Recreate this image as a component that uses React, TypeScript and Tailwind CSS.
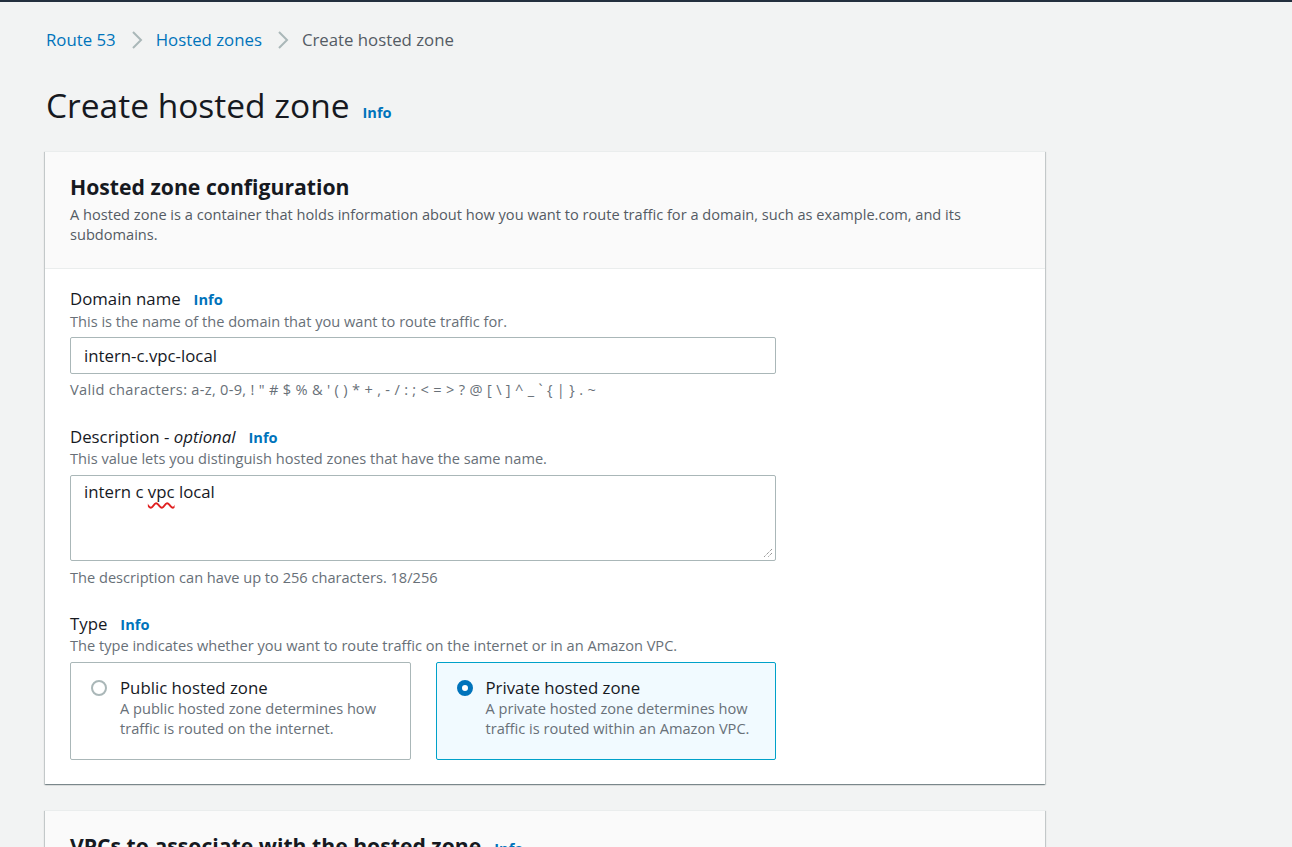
const font = { fontFamily: '"Open Sans", "Noto Sans", Arial, sans-serif' };

const Chevron = () => (
  <svg className="ml-[15px] mr-[13px] shrink-0" width="12" height="20" viewBox="0 0 12 20">
    <path d="M2 2 L10 10 L2 18" fill="none" stroke="#aab7b8" strokeWidth="2" />
  </svg>
);

const Info = ({ className = "" }: { className?: string }) => (
  <span className={`text-[14.6px] font-bold text-[#0073bb] ml-[13px] ${className}`}>Info</span>
);

const RadioCard = ({
  title,
  desc,
  checked,
}: {
  title: string;
  desc: string;
  checked?: boolean;
}) => (
  <div
    className={`flex-1 rounded-[2px] border pt-[14px] pl-[20px] pr-4 h-[98px] flex gap-[13px] ${
      checked ? "border-[#00a1c9] bg-[#f1faff]" : "border-[#aab7b8] bg-white"
    }`}
  >
    <div className="pt-[3px]">
      {checked ? (
        <div className="w-4 h-4 rounded-full border-[5px] border-[#0073bb] bg-white" />
      ) : (
        <div className="w-4 h-4 rounded-full border-2 border-[#aab7b8] bg-white" />
      )}
    </div>
    <div>
      <div className="text-[16.8px] leading-[22px] text-[#16191f]">{title}</div>
      <div className="text-[14.6px] leading-[19.5px] text-[#687078] max-w-[280px]">{desc}</div>
    </div>
  </div>
);

const cardShadow =
  "shadow-[0_1px_1px_0_rgba(0,28,36,0.3),1px_1px_1px_0_rgba(0,28,36,0.15),-1px_1px_1px_0_rgba(0,28,36,0.15)]";

export default function App() {
  return (
    <div className="min-h-screen bg-[#f2f3f3] text-[#16191f]" style={font}>
      <div className="h-[2px] bg-[#232f3e]" />
      <div className="pl-[45px] pb-10">
        {/* Breadcrumbs */}
        <nav className="pt-[26px] flex items-center h-[50px] text-[16.8px] leading-6">
          <span className="text-[#0073bb] ml-px">Route 53</span>
          <Chevron />
          <span className="text-[#0073bb]">Hosted zones</span>
          <Chevron />
          <span className="text-[#545b64]">Create hosted zone</span>
        </nav>

        {/* Title */}
        <div className="mt-[33px] h-10 flex items-baseline">
          <h1 className="text-[33.5px] leading-[40px] font-normal ml-px">Create hosted zone</h1>
          <span className="text-[14.6px] font-bold text-[#0073bb] ml-[13px]">Info</span>
        </div>

        {/* Hosted zone configuration */}
        <section className={`mt-[26px] w-[1000px] bg-white border-t border-[#eaeded] ${cardShadow}`}>
          <div className="bg-[#fafafa] border-b border-[#eaeded] pt-[19px] pb-6 px-[25px]">
            <h2 className="text-[21.2px] leading-8 font-bold">Hosted zone configuration</h2>
            <p className="mt-px text-[14.6px] leading-5 text-[#545b64] max-w-[910px]">
              A hosted zone is a container that holds information about how you want to route traffic for a domain,
              such as example.com, and its subdomains.
            </p>
          </div>

          <div className="px-[25px] pt-[19px] pb-[24px]">
            {/* Domain name */}
            <div className="flex items-baseline text-[16.8px] leading-[22px]">
              <span>Domain name</span>
              <Info />
            </div>
            <p className="text-[14.6px] leading-5 text-[#687078] mt-px">
              This is the name of the domain that you want to route traffic for.
            </p>
            <div className="mt-[6px] w-[706px] h-[37px] border border-[#aab7b8] rounded-[2px] bg-white flex items-center px-[13px] text-[16.8px]">
              intern-c.vpc-local
            </div>
            <p className="mt-[5px] text-[14.6px] leading-5 text-[#687078] tracking-[0.3px]">
              Valid characters: a-z, 0-9, ! " # $ % &amp; ' ( ) * + , - / : ; &lt; = &gt; ? @ [ \ ] ^ _ ` {"{"} | {"}"} . ~
            </p>

            {/* Description */}
            <div className="mt-[27px] flex items-baseline text-[16.8px] leading-[22px]">
              <span>
                Description - <i>optional</i>
              </span>
              <Info />
            </div>
            <p className="text-[14.6px] leading-5 text-[#687078]">
              This value lets you distinguish hosted zones that have the same name.
            </p>
            <div className="relative mt-[7px] w-[706px] h-[86px] border border-[#aab7b8] rounded-[2px] bg-white px-[13px] pt-[4px] text-[16.8px] leading-[24px]">
              intern c{" "}
              <span className="underline decoration-wavy decoration-[#e02020] decoration-[1.5px] underline-offset-[4px]">vpc</span>{" "}
              local
              <svg className="absolute right-[2px] bottom-[2px]" width="10" height="10" viewBox="0 0 10 10">
                <path d="M9 1 L1 9 M9 5 L5 9" stroke="#6b6b6b" strokeWidth="1" strokeDasharray="1 1" />
              </svg>
            </div>
            <p className="mt-[6px] text-[14.6px] leading-5 text-[#687078]">
              The description can have up to 256 characters. 18/256
            </p>

            {/* Type */}
            <div className="mt-[26px] flex items-baseline text-[16.8px] leading-[22px]">
              <span>Type</span>
              <Info />
            </div>
            <p className="text-[14.6px] leading-5 text-[#687078]">
              The type indicates whether you want to route traffic on the internet or in an Amazon VPC.
            </p>
            <div className="mt-[7px] w-[706px] flex gap-[25px]">
              <RadioCard
                title="Public hosted zone"
                desc="A public hosted zone determines how traffic is routed on the internet."
              />
              <RadioCard
                checked
                title="Private hosted zone"
                desc="A private hosted zone determines how traffic is routed within an Amazon VPC."
              />
            </div>
          </div>
        </section>

        {/* VPCs */}
        <section className={`mt-[26px] w-[1000px] bg-white border-t border-[#eaeded] ${cardShadow}`}>
          <div className="bg-[#fafafa] border-b border-[#eaeded] pt-[19px] pb-6 px-[25px]">
            <div className="flex items-baseline">
              <h2 className="text-[21.2px] leading-8 font-bold">VPCs to associate with the hosted zone</h2>
              <Info />
            </div>
            <p className="mt-px text-[14.6px] leading-5 text-[#545b64]">
              To use this hosted zone to resolve DNS queries for one or more VPCs, choose the VPCs.
            </p>
          </div>
          <div className="h-32" />
        </section>
      </div>
    </div>
  );
}
